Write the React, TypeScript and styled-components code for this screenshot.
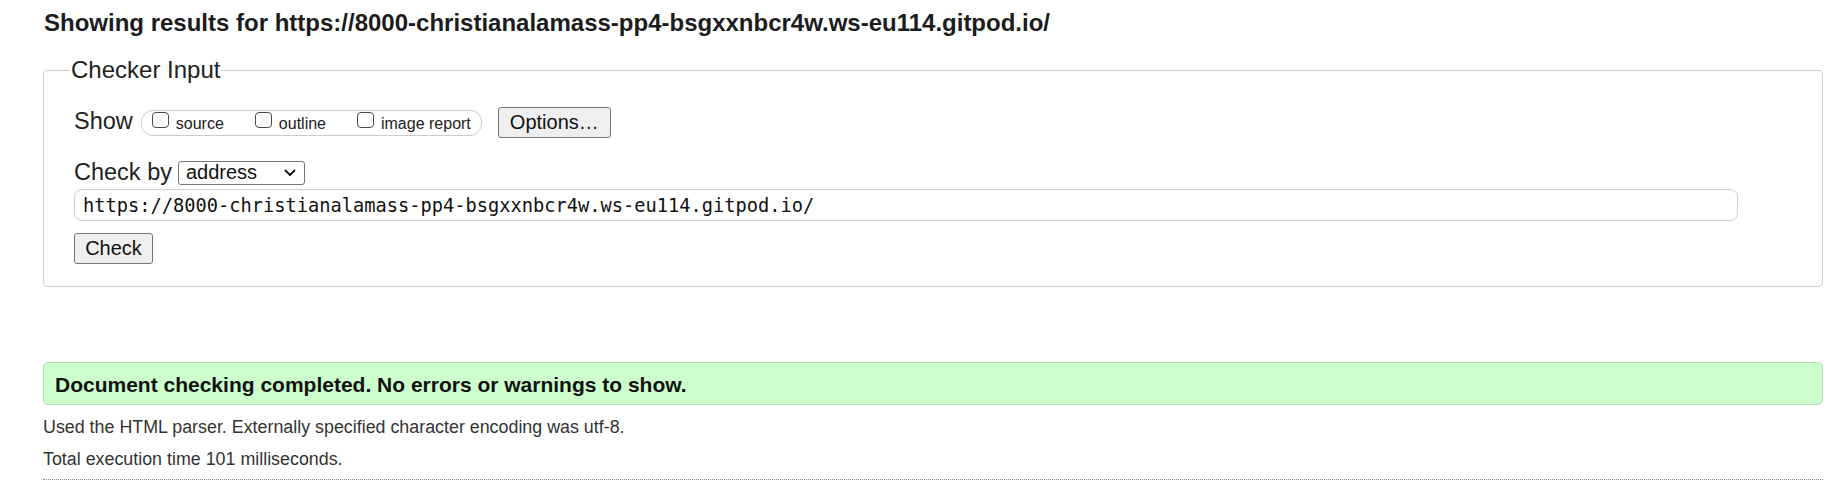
import React from "react";
import styled, { createGlobalStyle } from "styled-components";

const GlobalStyle = createGlobalStyle`
  html, body {
    margin: 0;
    padding: 0;
    background: #ffffff;
  }
  body {
    font-family: "Liberation Sans", Arial, sans-serif;
    color: #222222;
  }
`;

const Page = styled.div`
  padding: 0 22px 0 43px;
`;

const Title = styled.h2`
  margin: 9px 0 0 1px;
  font-size: 24px;
  line-height: 28px;
  font-weight: bold;
  color: #1c1c1c;
`;

const Fieldset = styled.fieldset`
  margin: 19px 0 0 0;
  padding: 0 30px 22px 30px;
  border: 1px solid #cfcfcf;
  border-radius: 4px;
  min-width: 0;
`;

const Legend = styled.legend`
  font-size: 24px;
  line-height: 28px;
  padding: 0 1px;
  margin-left: -4px;
  color: #222222;
`;

const Row = styled.div<{ $top: number }>`
  display: flex;
  align-items: center;
  margin-top: ${(p) => p.$top}px;
`;

const RowLabel = styled.span<{ $gap: number; $lift?: number }>`
  font-size: 23.5px;
  line-height: 28px;
  margin-right: ${(p) => p.$gap}px;
  margin-bottom: ${(p) => p.$lift ?? 0}px;
  color: #222222;
`;

const Pill = styled.div`
  display: flex;
  align-items: flex-start;
  gap: 31px;
  height: 24px;
  padding: 0 10px;
  border: 1px solid #cccccc;
  border-radius: 12px;
`;

const Option = styled.label`
  display: flex;
  align-items: flex-start;
`;

const Box = styled.span`
  display: block;
  box-sizing: border-box;
  width: 17px;
  height: 16px;
  margin-top: 1px;
  margin-right: 7px;
  border: 1.5px solid #4a4a4a;
  border-radius: 4px;
  background: #ffffff;
`;

const OptionText = styled.span`
  font-size: 16px;
  line-height: 18px;
  margin-top: 4.5px;
  color: #222222;
`;

const Button = styled.button<{ $w: number }>`
  box-sizing: border-box;
  width: ${(p) => p.$w}px;
  height: 31px;
  padding: 0;
  font-family: "Liberation Sans", Arial, sans-serif;
  font-size: 20px;
  color: #111111;
  background: #efefef;
  border: 1px solid #767676;
  border-radius: 3px;
`;

const OptionsButton = styled(Button)`
  margin-left: 16px;
`;

const Select = styled.div`
  box-sizing: border-box;
  display: flex;
  align-items: center;
  justify-content: space-between;
  width: 127px;
  height: 24px;
  padding: 0 8px 0 7px;
  margin-top: 1px;
  border: 1px solid #767676;
  border-radius: 3px;
  font-size: 20px;
  color: #111111;
  background: #ffffff;
`;

const UrlInput = styled.div`
  box-sizing: border-box;
  display: flex;
  align-items: center;
  width: calc(100% - 54px);
  height: 32px;
  margin-top: 3px;
  padding: 0 8px;
  border: 1px solid #cfcfcf;
  border-radius: 8px;
  font-family: "DejaVu Sans Mono", "Liberation Mono", monospace;
  font-size: 18.7px;
  color: #111111;
`;

const CheckButton = styled(Button)`
  display: block;
  margin-top: 12px;
`;

const Success = styled.div`
  box-sizing: border-box;
  margin-top: 75px;
  height: 43px;
  padding: 9px 11px 0;
  border: 1px solid #b9d9b9;
  border-radius: 5px;
  background: #ccffcc;
  font-size: 21px;
  line-height: 25px;
  font-weight: bold;
  color: #111111;
`;

const Notes = styled.div`
  padding-top: 6px;
  padding-bottom: 4px;
  border-bottom: 1px dotted #8a8a8a;
`;

const Note = styled.p`
  margin: 0;
  font-size: 17.85px;
  line-height: 32px;
  color: #333333;
`;

const Chevron = () => (
  <svg width="12" height="8" viewBox="0 0 12 8" fill="none">
    <path d="M1.5 1.5 L6 6 L10.5 1.5" stroke="#111" strokeWidth="1.8" strokeLinecap="round" strokeLinejoin="round" />
  </svg>
);

const URL = "https://8000-christianalamass-pp4-bsgxxnbcr4w.ws-eu114.gitpod.io/";

export default function App() {
  return (
    <>
      <GlobalStyle />
      <Page>
        <Title>Showing results for {URL}</Title>
        <Fieldset>
          <Legend>Checker Input</Legend>
          <Row $top={23}>
            <RowLabel $gap={8} $lift={3}>Show</RowLabel>
            <Pill>
              <Option>
                <Box />
                <OptionText>source</OptionText>
              </Option>
              <Option>
                <Box />
                <OptionText>outline</OptionText>
              </Option>
              <Option>
                <Box />
                <OptionText>image report</OptionText>
              </Option>
            </Pill>
            <OptionsButton $w={113}>Options…</OptionsButton>
          </Row>
          <Row $top={20}>
            <RowLabel $gap={6}>Check by</RowLabel>
            <Select>
              <span>address</span>
              <Chevron />
            </Select>
          </Row>
          <UrlInput>{URL}</UrlInput>
          <CheckButton $w={79}>Check</CheckButton>
        </Fieldset>
        <Success>Document checking completed. No errors or warnings to show.</Success>
        <Notes>
          <Note>Used the HTML parser. Externally specified character encoding was utf-8.</Note>
          <Note>Total execution time 101 milliseconds.</Note>
        </Notes>
      </Page>
    </>
  );
}
